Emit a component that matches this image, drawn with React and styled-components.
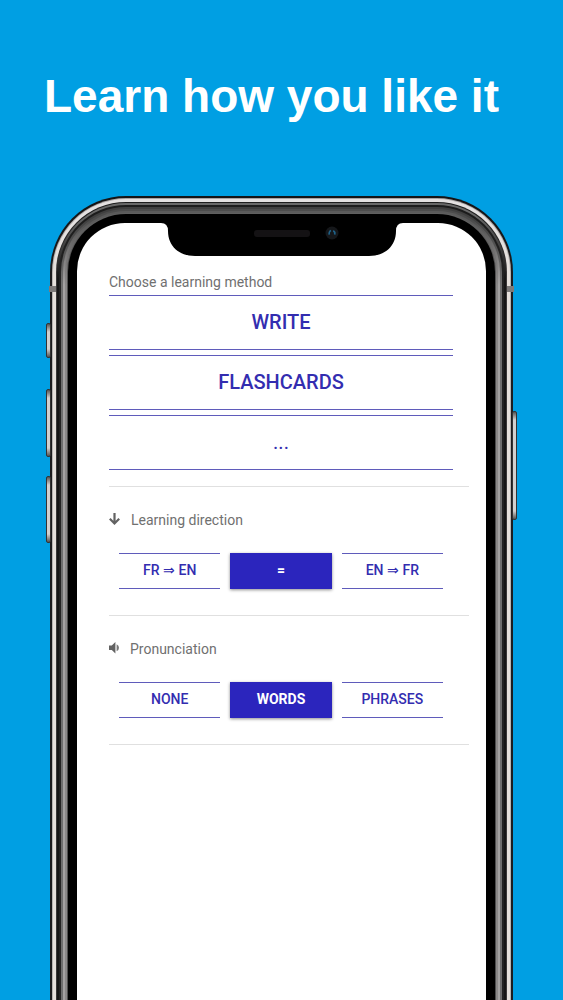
import React, { useState } from 'react';
import styled, { createGlobalStyle } from 'styled-components';

const INDIGO = '#2b25bd';
const INDIGO_TEXT = '#332db0';
const INDIGO_LINE = '#5f5bbb';

// phone edge, from the outside in
const RINGS = [
  { size: 2, top: '#141416', side: '#1c1c1e' },
  { size: 1, top: '#a9a5a5', side: '#b9b5b2' },
  { size: 3, top: '#e4e1e1', side: '#e6e1dc' },
  { size: 1, top: '#1d1d1d', side: '#3a3838' },
  { size: 2, top: '#686868', side: '#161616' },
  { size: 2, top: '#1c1c1c', side: '#232323' },
  { size: 2, top: '#3f3f3f', side: '#6e6e6e' },
  { size: 2, top: '#4c4c4c', side: '#a3a1a1' },
  { size: 2, top: '#5a5a5a', side: '#8a8888' },
  { size: 1, top: '#5f5f5f', side: '#4e4e4e' },
  { size: 9, top: '#000', side: '#000' },
];

const METHODS = ['WRITE', 'FLASHCARDS', '...'];
const DIRECTIONS = ['FR ⇒ EN', '=', 'EN ⇒ FR'];
const PRONUNCIATIONS = ['NONE', 'WORDS', 'PHRASES'];

const GlobalStyle = createGlobalStyle`
  * {
    box-sizing: border-box;
  }

  html,
  body {
    margin: 0;
    background-color: #009fe3;
  }

  body,
  button {
    font-family: Roboto, 'Liberation Sans', sans-serif;
  }
`;

const Page = styled.main`
  min-height: 100vh;
  display: flex;
  flex-direction: column;
  overflow: hidden;
`;

const Headline = styled.h1`
  margin: 0;
  padding: 67px 24px 71px 44px;
  color: #fff;
  font-family: 'Liberation Sans', sans-serif;
  font-size: 46px;
  font-weight: 700;
  line-height: 58px;
`;

const Phone = styled.div`
  position: relative;
  flex: 1;
  display: flex;
  margin: 0 50px;
`;

const Ring = styled.div`
  flex: 1;
  display: flex;
  padding: ${({ $size }) => `${$size}px ${$size}px 0`};
  border-radius: ${({ $radius }) => `${$radius}px ${$radius}px 0 0`};
  background: ${({ $top, $side }) =>
    `linear-gradient(${$top} 12px, ${$side} 76px)`};
`;

const Screen = styled.div`
  flex: 1;
  min-width: 0;
  border-radius: 48px 48px 0 0;
  background-color: #fff;
`;

const SideKey = styled.span`
  position: absolute;
  top: ${({ $top }) => $top}px;
  ${({ $right }) => ($right ? 'right' : 'left')}: -4px;
  width: 5px;
  height: ${({ $height }) => $height}px;
  border: 1px solid #333;
  border-radius: 2px;
  background: linear-gradient(#555, #d2d0ce 8px calc(100% - 8px), #555);
`;

const AntennaBand = styled.span`
  position: absolute;
  top: 90px;
  ${({ $right }) => ($right ? 'right' : 'left')}: -1px;
  width: 7px;
  height: 6px;
  background-color: #7d7a79;
`;

const NotchArt = styled.svg`
  display: block;
  margin: 0 auto;
`;

const Settings = styled.div`
  padding: 16px 17px 24px 32px;
`;

const Label = styled.h2`
  display: flex;
  align-items: center;
  gap: 10px;
  margin: 0;
  color: #707070;
  font-size: 14px;
  font-weight: 400;
  line-height: 20px;
`;

const MethodList = styled.div`
  display: grid;
  gap: 5px;
  margin: 3px 16px 16px 0;
`;

const MethodButton = styled.button`
  height: 55px;
  padding: 0 0 1px;
  border: solid ${INDIGO_LINE};
  border-width: 1px 0;
  background: none;
  color: ${INDIGO_TEXT};
  font-size: 20px;
  font-weight: ${({ $light }) => ($light ? 400 : 500)};
  cursor: pointer;
`;

const Section = styled.section`
  padding: 23px 0 26px;
  border-top: 1px solid #e0e0e0;

  &:last-child {
    border-bottom: 1px solid #e0e0e0;
  }
`;

const Choices = styled.div`
  display: grid;
  grid-template-columns: repeat(3, 1fr);
  gap: 10px;
  margin: 23px 26px 0 10px;
`;

const ChoiceButton = styled.button`
  height: 36px;
  padding: 0 0 2px;
  border: solid ${({ $active }) => ($active ? INDIGO : INDIGO_LINE)};
  border-width: 1px 0;
  background-color: ${({ $active }) => ($active ? INDIGO : 'transparent')};
  box-shadow: ${({ $active }) =>
    $active ? '0 1px 3px rgba(0, 0, 0, 0.45)' : 'none'};
  color: ${({ $active }) => ($active ? '#fff' : INDIGO_TEXT)};
  font-size: 14px;
  font-weight: ${({ $active }) => ($active ? 700 : 500)};
  cursor: pointer;
`;

const ArrowIcon = () => (
  <svg width='12' height='16' viewBox='0 0 12 16' aria-hidden='true'>
    <path
      d='M5.5 1V11.6M0.8 6.8L5.5 11.5L10.2 6.8'
      fill='none'
      stroke='#626262'
      strokeWidth='2.2'
    />
  </svg>
);

const SpeakerIcon = () => (
  <svg width='11' height='16' viewBox='0 0 11 16' aria-hidden='true'>
    <path d='M0 4.6H2.8L6.4 1V12.4L2.8 9H0Z' fill='#626262' />
    <path d='M7.6 3.2Q10 4.2 10 6.8T7.6 10.2Z' fill='#777' />
  </svg>
);

const Notch = () => (
  <NotchArt width='242' height='33' viewBox='0 0 242 33' aria-hidden='true'>
    <path d='M0 0H242Q235 0 235 8C235 23 224 33 208 33H34C18 33 7 23 7 8Q7 0 0 0Z' />
    <rect x='93' y='7' width='56' height='7' rx='3' fill='#141214' />
    <circle cx='171' cy='10' r='6.5' fill='#15171a' />
    <path
      d='M168.4 11.6A3 3 0 0 1 170 7.6M172.2 7.8A3 3 0 0 1 173.6 11.6'
      fill='none'
      stroke='#1f6288'
      strokeWidth='1.6'
    />
  </NotchArt>
);

const ChoiceGroup = ({ icon, title, options, initial }) => {
  const [selected, setSelected] = useState(initial);

  return (
    <Section>
      <Label>
        {icon}
        {title}
      </Label>
      <Choices role='group' aria-label={title}>
        {options.map((option) => (
          <ChoiceButton
            key={option}
            type='button'
            $active={option === selected}
            aria-pressed={option === selected}
            onClick={() => setSelected(option)}
          >
            {option}
          </ChoiceButton>
        ))}
      </Choices>
    </Section>
  );
};

const PhoneBody = ({ children }) => {
  let radius = 76;
  const layers = RINGS.map((ring) => {
    const layer = { ...ring, radius };
    radius -= ring.size;
    return layer;
  });

  return layers.reduceRight(
    (inner, { size, top, side, radius: r }) => (
      <Ring $size={size} $top={top} $side={side} $radius={r}>
        {inner}
      </Ring>
    ),
    <Screen>{children}</Screen>
  );
};

const App = () => (
  <>
    <GlobalStyle />
    <Page>
      <Headline>Learn how you like it</Headline>
      <Phone>
        <SideKey $top={127} $height={35} />
        <SideKey $top={193} $height={68} />
        <SideKey $top={280} $height={67} />
        <SideKey $right $top={215} $height={109} />
        <PhoneBody>
          <Notch />
          <Settings>
            <Label>Choose a learning method</Label>
            <MethodList>
              {METHODS.map((method) => (
                <MethodButton
                  key={method}
                  type='button'
                  $light={method === '...'}
                >
                  {method}
                </MethodButton>
              ))}
            </MethodList>
            <ChoiceGroup
              icon={<ArrowIcon />}
              title='Learning direction'
              options={DIRECTIONS}
              initial='='
            />
            <ChoiceGroup
              icon={<SpeakerIcon />}
              title='Pronunciation'
              options={PRONUNCIATIONS}
              initial='WORDS'
            />
          </Settings>
        </PhoneBody>
        <AntennaBand />
        <AntennaBand $right />
      </Phone>
    </Page>
  </>
);

export default App;
